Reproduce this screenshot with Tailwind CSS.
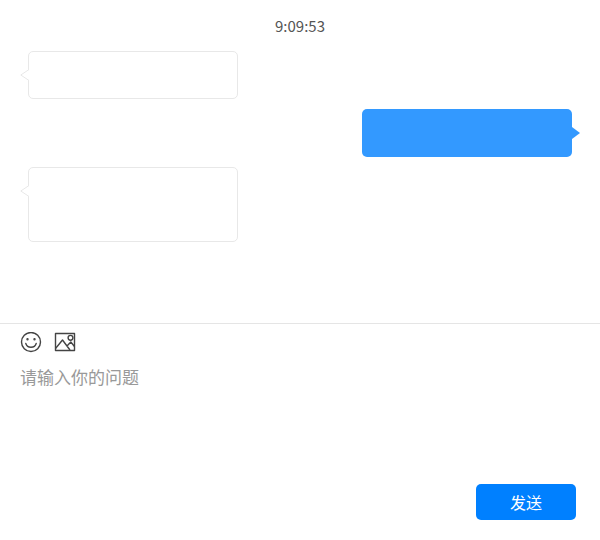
<!DOCTYPE html>
<html lang="zh-CN">
<head>
<meta charset="utf-8">
<meta name="viewport" content="width=device-width, initial-scale=1">
<title>在线咨询</title>
<script src="https://cdn.jsdelivr.net/npm/@tailwindcss/browser@4"></script>
</head>
<body class="flex min-h-screen flex-col bg-white font-['Noto_Sans_CJK_SC',sans-serif]">
<main class="flex flex-col px-5 pt-4 pb-[81px]">
  <time class="self-center text-[15px] leading-5 text-[#555]">9:09:53</time>
  <div class="mt-[15px] flex items-start">
    <svg class="relative z-10 -mr-px mt-[17px] h-3.5 w-[9px]" viewBox="0 0 9 14" fill="#fff" stroke="#e8e8e8" aria-hidden="true"><path d="M9 1.5 .8 7 9 12.5"/></svg>
    <div class="h-12 w-[210px] rounded-[5px] border border-[#e8e8e8]"></div>
  </div>
  <div class="mt-2.5 flex items-start justify-end">
    <div class="h-12 w-[210px] rounded-[5px] bg-[#3399ff]"></div>
    <svg class="mt-[18px] h-3 w-2" viewBox="0 0 8 12" fill="#3399ff" aria-hidden="true"><path d="M0 0 8 6 0 12z"/></svg>
  </div>
  <div class="mt-2.5 flex items-start">
    <svg class="relative z-10 -mr-px mt-[17px] h-3.5 w-[9px]" viewBox="0 0 9 14" fill="#fff" stroke="#e8e8e8" aria-hidden="true"><path d="M9 1.5 .8 7 9 12.5"/></svg>
    <div class="h-[75px] w-[210px] rounded-[5px] border border-[#e8e8e8]"></div>
  </div>
</main>
<form class="flex flex-1 flex-col border-t border-[#e5e5e5] px-5 pt-2 pb-5">
  <div class="flex gap-3">
    <button type="button" aria-label="表情" class="size-[22px]">
      <svg class="size-[22px]" viewBox="0 0 22 22" fill="none" stroke="#444" stroke-width="1.4" stroke-linecap="round"><circle cx="11" cy="10" r="9.5"/><path d="M5.800 11.500c1.500 5 8.900 5 10.400 0"/><circle cx="7.500" cy="7.200" r=".5" fill="#444"/><circle cx="14.500" cy="7.200" r=".5" fill="#444"/></svg>
    </button>
    <button type="button" aria-label="图片" class="size-[22px]">
      <svg class="size-[22px]" viewBox="0 0 22 22" fill="none" stroke="#444" stroke-width="1.4" stroke-linejoin="round"><path d="M1.500 1.500h19v17h-19z"/><circle cx="16.500" cy="5.800" r="2.400"/><path d="M1.500 16.500 8.500 8l7.500 10M13 14l3.800-4 3.700 4.500"/></svg>
    </button>
  </div>
  <textarea aria-label="请输入你的问题" placeholder="请输入你的问题" class="mt-[11px] min-h-24 flex-1 resize-none text-[17px] leading-6 text-[#333] outline-none placeholder:text-[#999]"></textarea>
  <button type="submit" class="mr-1 h-9 w-[100px] self-end rounded-[5px] bg-[#0080ff] text-base leading-6 text-white">发送</button>
</form>
</body>
</html>
